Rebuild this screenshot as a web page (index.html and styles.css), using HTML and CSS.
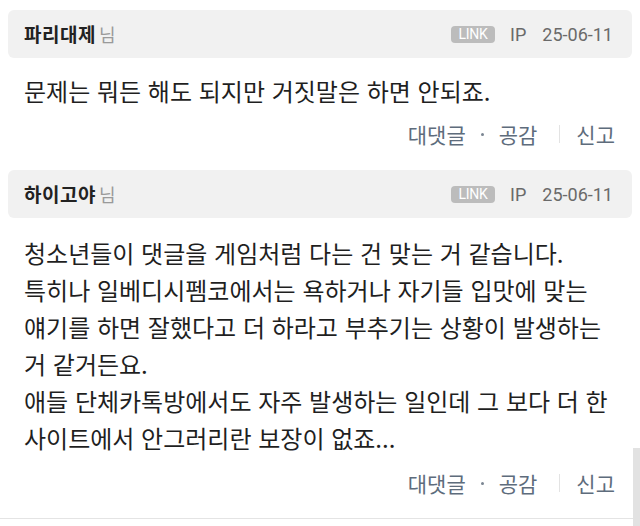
FILE: index.html
```html
<!DOCTYPE html>
<html lang="ko">
<head>
<meta charset="utf-8">
<link rel="stylesheet" href="styles.css">
</head>
<body>
<div class="page">
  <div class="list">
    <div class="comment c1">
      <div class="head">
        <div class="author"><span class="name">파리대제</span><span class="nim">님</span></div>
        <div class="meta"><span class="badge">LINK</span><span class="ip">IP</span><span class="date">25-06-11</span></div>
      </div>
      <div class="text">문제는 뭐든 해도 되지만 거짓말은 하면 안되죠.</div>
      <div class="actions">
        <span class="act">대댓글</span><span class="dot"></span><span class="act">공감</span><span class="bar"></span><span class="act">신고</span>
      </div>
    </div>
    <div class="comment c2">
      <div class="head">
        <div class="author"><span class="name">하이고야</span><span class="nim">님</span></div>
        <div class="meta"><span class="badge">LINK</span><span class="ip">IP</span><span class="date">25-06-11</span></div>
      </div>
      <div class="text">청소년들이 댓글을 게임처럼 다는 건 맞는 거 같습니다.<br>특히나 일베디시펨코에서는 욕하거나 자기들 입맛에 맞는<br>얘기를 하면 잘했다고 더 하라고 부추기는 상황이 발생하는<br>거 같거든요.<br>애들 단체카톡방에서도 자주 발생하는 일인데 그 보다 더 한<br>사이트에서 안그러리란 보장이 없죠...</div>
      <div class="actions">
        <span class="act">대댓글</span><span class="dot"></span><span class="act">공감</span><span class="bar"></span><span class="act">신고</span>
      </div>
    </div>
  </div>
  <div class="divider"></div>
  <div class="scrollbar"></div>
</div>
</body>
</html>
```
FILE: styles.css
```css
html, body {
  margin: 0;
  padding: 0;
  background: #ffffff;
}
body {
  font-family: "Noto Sans CJK KR", "Noto Sans", sans-serif;
  color: #1f1f1f;
}
.page {
  position: relative;
  width: 640px;
  height: 526px;
  overflow: hidden;
}
.list {
  padding: 10px 8px 0 8px;
}
.comment {
  display: flex;
  flex-direction: column;
}
.c2 {
  margin-top: 21px;
  padding-bottom: 20px;
}
.head {
  height: 48px;
  background: #f1f1f1;
  border-radius: 6px;
  display: flex;
  align-items: center;
  justify-content: space-between;
  padding: 0 19px 0 16px;
}
.author {
  display: flex;
  align-items: center;
  line-height: 26px;
}
.name {
  font-size: 19px;
  font-weight: 700;
  letter-spacing: 0.5px;
  color: #222222;
}
.nim {
  margin-left: 3px;
  font-size: 18px;
  color: #9a9a9a;
}
.meta {
  display: flex;
  align-items: center;
  font-family: Roboto, "Liberation Sans", sans-serif;
  font-size: 18px;
  color: #6a6a6a;
}
.badge {
  width: 44px;
  height: 17px;
  border-radius: 4px;
  background: #bcbcbc;
  color: #ffffff;
  font-size: 14px;
  line-height: 17px;
  text-align: center;
  letter-spacing: -0.3px;
}
.ip {
  margin-left: 15px;
}
.date {
  margin-left: 16px;
}
.text {
  padding-left: 16px;
  font-size: 24px;
  line-height: 37px;
  white-space: nowrap;
  color: #1f1f1f;
}
.c1 .text {
  margin-top: 14px;
}
.c2 .text {
  margin-top: 16px;
}
.actions {
  display: flex;
  align-items: center;
  justify-content: flex-end;
  height: 30px;
  padding-right: 17px;
  font-size: 21px;
  color: #5e6c7c;
}
.c1 .actions {
  margin-top: 10px;
}
.c2 .actions {
  margin-top: 12px;
}
.dot {
  width: 3px;
  height: 3px;
  border-radius: 50%;
  background: #7a8592;
  margin: 0 15px;
}
.bar {
  width: 1px;
  height: 18px;
  background: #e3e3e3;
  margin: 0 16px 0 22px;
}
.divider {
  height: 1px;
  margin-right: 7px;
  background: #e4e4e4;
}
.scrollbar {
  position: absolute;
  right: 0;
  top: 448px;
  bottom: 0;
  width: 7px;
  background: #e2e2e2;
}
```
